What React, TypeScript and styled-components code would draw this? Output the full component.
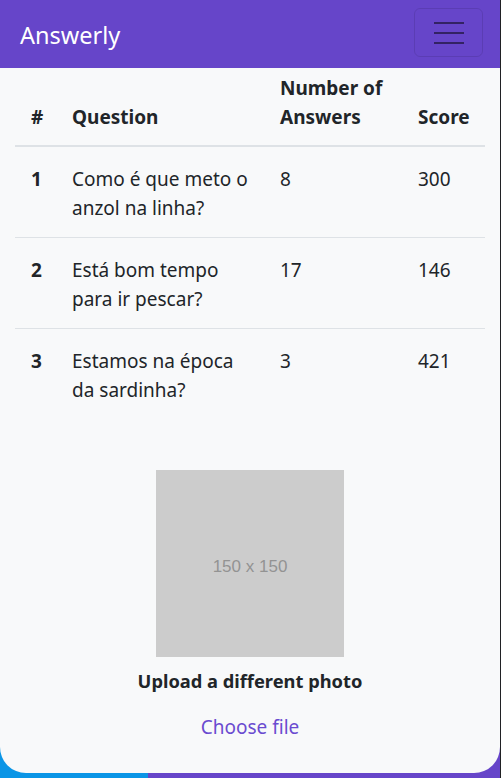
import React from "react";
import styled, { createGlobalStyle } from "styled-components";

const GlobalStyle = createGlobalStyle`
  html, body { margin: 0; padding: 0; }
  body {
    font-family: "Noto Sans", "Open Sans", sans-serif;
    color: #212529;
    background: #ffffff;
  }
`;

const Page = styled.div`
  width: 500px;
  height: 778px;
  border-right: 1px solid #202124;
  background: linear-gradient(to right, #0a95e6 0, #0a95e6 148px, #6645c9 148px, #6645c9 100%);
  display: flex;
  flex-direction: column;
  overflow: hidden;
`;

const Card = styled.div`
  flex: 0 0 773px;
  background: #f8f9fa;
  border-radius: 0 0 26px 26px;
  display: flex;
  flex-direction: column;
  overflow: hidden;
`;

const Navbar = styled.nav`
  height: 68px;
  background: #6645c9;
  display: flex;
  align-items: center;
  justify-content: space-between;
  padding: 0 17px 0 20px;
  box-sizing: border-box;
`;

const Brand = styled.a`
  color: #ffffff;
  font-size: 23.5px;
  line-height: 1;
  text-decoration: none;
  padding-top: 3px;
`;

const Toggler = styled.button`
  width: 69px;
  height: 49px;
  margin-top: -3px;
  border: 1px solid rgba(0, 0, 0, 0.1);
  border-radius: 6px;
  background: transparent;
  display: flex;
  flex-direction: column;
  align-items: center;
  justify-content: center;
  gap: 8px;
  padding: 0;
`;

const Bar = styled.span`
  display: block;
  width: 30px;
  height: 2px;
  background: rgba(0, 0, 0, 0.5);
`;

const Content = styled.main`
  padding: 0 15px;
  display: flex;
  flex-direction: column;
  align-items: center;
`;

const Table = styled.table`
  width: 470px;
  border-collapse: collapse;
  table-layout: fixed;
  font-size: 19px;
  line-height: 29px;
`;

const HeadCell = styled.th`
  text-align: left;
  vertical-align: bottom;
  font-weight: 700;
  padding: 6px 8px 13px 16px;
  border-bottom: 2px solid #dee2e6;
`;

const Row = styled.tr<{ $last?: boolean }>`
  border-bottom: ${(p) => (p.$last ? "none" : "1px solid #dee2e6")};
`;

const Cell = styled.td<{ $bold?: boolean }>`
  vertical-align: top;
  font-weight: ${(p) => (p.$bold ? 700 : 400)};
  padding: 18px 8px 14px 16px;
`;

const Placeholder = styled.div`
  width: 188px;
  height: 187px;
  margin-top: 51px;
  background: #cccccc;
  color: #939393;
  font-family: "Liberation Sans", Arial, sans-serif;
  font-size: 17px;
  display: flex;
  align-items: center;
  justify-content: center;
  padding-top: 6px;
  box-sizing: border-box;
`;

const UploadLabel = styled.div`
  margin-top: 9px;
  font-size: 18.3px;
  line-height: 29px;
  font-weight: 700;
`;

const FileLink = styled.a`
  margin-top: 18px;
  font-size: 19px;
  line-height: 29px;
  color: #6a4bd0;
  text-decoration: none;
`;

const rows = [
  { n: 1, q: "Como é que meto o anzol na linha?", a: 8, s: 300 },
  { n: 2, q: "Está bom tempo para ir pescar?", a: 17, s: 146 },
  { n: 3, q: "Estamos na época da sardinha?", a: 3, s: 421 },
];

export default function App() {
  return (
    <>
      <GlobalStyle />
      <Page>
        <Card>
          <Navbar>
            <Brand href="#">Answerly</Brand>
            <Toggler aria-label="Toggle navigation">
              <Bar />
              <Bar />
              <Bar />
            </Toggler>
          </Navbar>
          <Content>
            <Table>
              <colgroup>
                <col style={{ width: 41 }} />
                <col style={{ width: 208 }} />
                <col style={{ width: 138 }} />
                <col style={{ width: 83 }} />
              </colgroup>
              <thead>
                <tr>
                  <HeadCell>#</HeadCell>
                  <HeadCell>Question</HeadCell>
                  <HeadCell>Number of Answers</HeadCell>
                  <HeadCell>Score</HeadCell>
                </tr>
              </thead>
              <tbody>
                {rows.map((r, i) => (
                  <Row key={r.n} $last={i === rows.length - 1}>
                    <Cell $bold>{r.n}</Cell>
                    <Cell>{r.q}</Cell>
                    <Cell>{r.a}</Cell>
                    <Cell>{r.s}</Cell>
                  </Row>
                ))}
              </tbody>
            </Table>
            <Placeholder>150 x 150</Placeholder>
            <UploadLabel>Upload a different photo</UploadLabel>
            <FileLink href="#">Choose file</FileLink>
          </Content>
        </Card>
      </Page>
    </>
  );
}
